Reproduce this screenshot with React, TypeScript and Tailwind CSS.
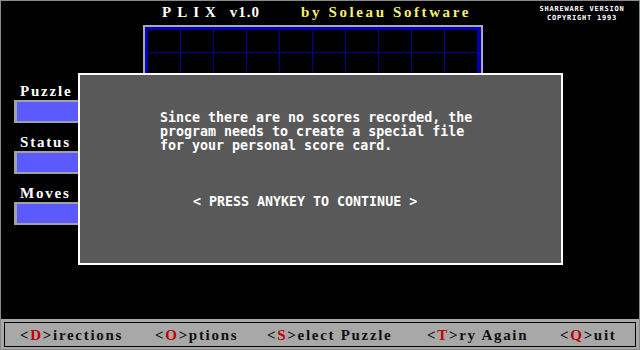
import React from "react";

const serif = { fontFamily: '"Liberation Serif", "Times New Roman", serif' };
const mono = { fontFamily: '"DejaVu Sans Mono", "Liberation Mono", monospace' };

function Field({ label }: { label: string }) {
  return (
    <div className="flex flex-col">
      <div className="pl-[19px] h-[16px] leading-[16px] text-[15px] font-bold text-white tracking-[1.8px]" style={serif}>
        {label}
      </div>
      <div className="mt-[1px] ml-[13px] w-[120px] h-[23px] bg-[#5a5aff] border-t-2 border-l-[3px] border-b-2 border-[#a0a0a8]" />
    </div>
  );
}

function Key({ k, rest, w }: { k: string; rest: string; w: string }) {
  return (
    <span className={`${w} shrink-0 whitespace-pre`}>
      {"<"}
      <span className="text-[#c00000]">{k}</span>
      {">" + rest}
    </span>
  );
}

export default function App() {
  const cells = Array.from({ length: 80 });
  return (
    <div className="w-[640px] h-[350px] bg-black border border-[#8a8a8a] relative flex flex-col overflow-hidden">
      {/* header */}
      <div className="h-[24px] flex items-start shrink-0">
        <div className="ml-[161px] mt-[3px] h-[16px] leading-[16px] text-[15px] font-bold text-white whitespace-pre flex" style={serif}>
          <span className="tracking-[6px]">PLIX</span>
          <span className="ml-[8px] tracking-[1px]">v1.0</span>
        </div>
        <div className="ml-[41px] mt-[3px] h-[16px] leading-[16px] text-[15px] font-bold text-[#f4f070] tracking-[2.6px] whitespace-pre" style={serif}>
          by Soleau Software
        </div>
        <div className="ml-auto mr-[12px] mt-[4px] w-[90px] text-center text-white text-[7px] leading-[9px] font-bold tracking-[0.8px]" style={mono}>
          <div>SHAREWARE VERSION</div>
          <div>COPYRIGHT 1993</div>
        </div>
      </div>

      {/* main */}
      <div className="flex-1 flex">
        <div className="w-[142px] shrink-0 flex flex-col gap-[11px] pt-[58px]">
          <Field label="Puzzle" />
          <Field label="Status" />
          <Field label="Moves" />
        </div>
        <div className="w-[340px] h-[194px] shrink-0 border-2 border-[#a8a8b0]">
          <div className="w-full h-full border-[3px] border-[#0000b8] bg-black grid grid-cols-10">
            {cells.map((_, i) => (
              <div key={i} className="h-[23px] border-r border-b border-[#000098]" />
            ))}
          </div>
        </div>
      </div>

      {/* bottom bar */}
      <div className="h-[30px] shrink-0 bg-[#a8a8a8] px-[3px] pt-[3px] pb-[2px]">
        <div className="h-full border border-black flex items-center pl-[15px] pt-[1px] text-[15px] font-bold text-[#101010] tracking-[1.7px]" style={serif}>
          <Key k="D" rest="irections" w="w-[135px]" />
          <Key k="O" rest="ptions" w="w-[112px]" />
          <Key k="S" rest="elect Puzzle" w="w-[160px]" />
          <Key k="T" rest="ry Again" w="w-[133px]" />
          <Key k="Q" rest="uit" w="w-[60px]" />
        </div>
      </div>

      {/* dialog */}
      <div className="absolute left-[77px] top-[72px] w-[485px] h-[192px] border-2 border-white bg-[#595959]">
        <div className="pl-[80px] pt-[36px] text-white font-bold text-[13.3px] leading-[14px] whitespace-pre" style={mono}>
          <div>Since there are no scores recorded, the</div>
          <div>program needs to create a special file</div>
          <div>for your personal score card.</div>
          <div className="mt-[42px] ml-[33px]">{"< PRESS ANYKEY TO CONTINUE >"}</div>
        </div>
      </div>
    </div>
  );
}
